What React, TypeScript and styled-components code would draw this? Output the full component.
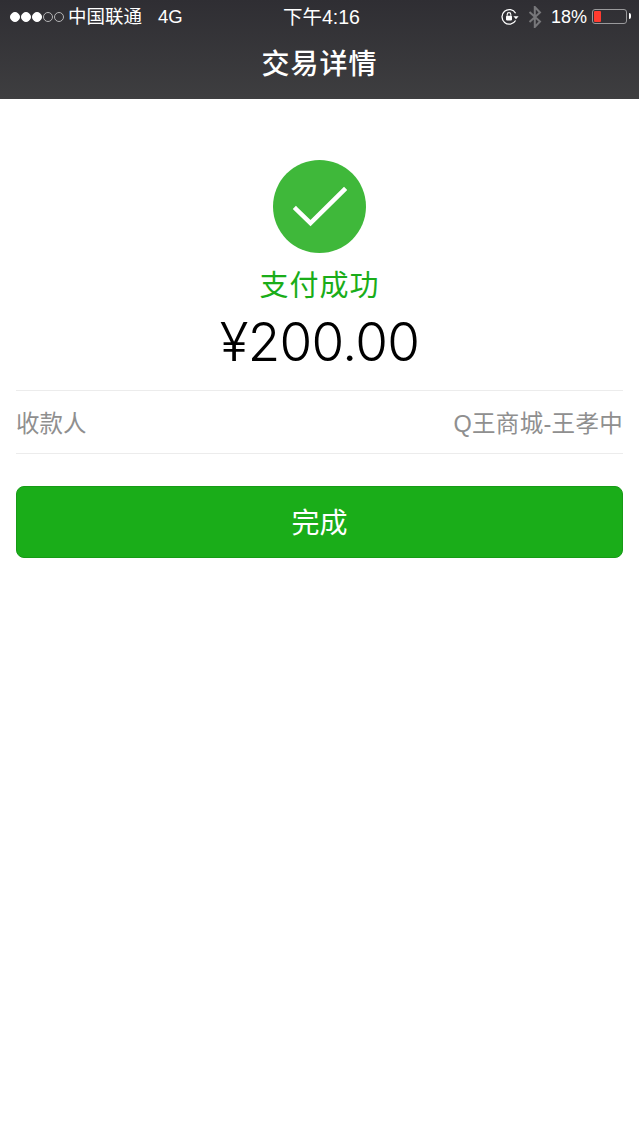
import styled, { createGlobalStyle } from "styled-components";

const GlobalStyle = createGlobalStyle`
    html, body {
        margin: 0;
        padding: 0;
        background: #ffffff;
    }
    body {
        font-family: "Liberation Sans", "Noto Sans CJK SC", sans-serif;
    }
`
const Page = styled.div`
    width: 639px;
    height: 1136px;
    display: flex;
    flex-direction: column;
    background: #ffffff;
    overflow: hidden;
`
const Header = styled.header`
    height: 99px;
    display: flex;
    flex-direction: column;
    background: linear-gradient(#2f2e33, #3e3e40);
    color: #ffffff;
`
const StatusBar = styled.div`
    height: 33px;
    display: grid;
    grid-template-columns: 1fr auto 1fr;
    align-items: center;
    padding: 0 12px 0 10px;
    line-height: 20px;
`
const StatusLeft = styled.div`
    display: flex;
    align-items: center;
    font-size: 18.5px;
`
const StatusRight = styled.div`
    display: flex;
    align-items: center;
    justify-content: flex-end;
`
const Signal = styled.div`
    display: flex;
    gap: 1px;
    margin-right: 4px;
`
const Dot = styled.span<{ $on: boolean }>`
    width: 10px;
    height: 10px;
    box-sizing: border-box;
    border-radius: 50%;
    background: ${(p) => (p.$on ? "#ffffff" : "transparent")};
    border: 1px solid ${(p) => (p.$on ? "#ffffff" : "#b5b5b7")};
`
const Carrier = styled.span`
    margin-right: 16px;
`
const Clock = styled.span`
    margin-left: 6px;
    font-size: 19.5px;
`
const Percent = styled.span`
    margin: 0 5px 0 9px;
    font-size: 18px;
`
const Battery = styled.div`
    width: 35px;
    height: 15px;
    box-sizing: border-box;
    border: 1px solid #9a9a9c;
    border-radius: 3px;
    padding: 1px;
    position: relative;
    &::after {
        content: "";
        position: absolute;
        right: -5px;
        top: 3px;
        width: 2px;
        height: 6px;
        background: #ffffff;
        border-radius: 0 2px 2px 0;
    }
`
const BatteryLevel = styled.div`
    width: 7px;
    height: 100%;
    background: #ff3b30;
    border-radius: 1px;
`
const BluetoothIcon = styled.svg`
    margin-left: 8px;
`
const Title = styled.h1`
    margin: 0;
    padding-top: 13px;
    font-size: 28px;
    line-height: 38px;
    font-weight: 500;
    letter-spacing: 1px;
    text-align: center;
`
const Main = styled.main`
    display: flex;
    flex-direction: column;
    padding: 0 16px;
`
const Result = styled.section`
    display: flex;
    flex-direction: column;
    align-items: center;
    padding-top: 61px;
`
const SuccessIcon = styled.div`
    width: 93px;
    height: 93px;
    border-radius: 50%;
    background: #3fb83a;
    display: flex;
    align-items: center;
    justify-content: center;
`
const ResultText = styled.div`
    margin-top: 14px;
    font-size: 29px;
    line-height: 38px;
    letter-spacing: 1px;
    color: #1aad19;
`
const Amount = styled.div`
    margin-top: 1px;
    font-family: Inter, "Liberation Sans", sans-serif;
    font-size: 53px;
    line-height: 72px;
    font-weight: 300;
    letter-spacing: -0.7px;
    color: #000000;
`
const DetailRow = styled.div`
    margin-top: 12px;
    height: 64px;
    box-sizing: border-box;
    padding-top: 4px;
    display: flex;
    align-items: center;
    justify-content: space-between;
    border-top: 1px solid #ececec;
    border-bottom: 1px solid #ececec;
    font-size: 23.5px;
    line-height: 30px;
    color: #8f8f8f;
`
const Payee = styled.span`
    letter-spacing: 0.3px;
`
const DoneButton = styled.button`
    margin-top: 32px;
    height: 72px;
    padding: 4px 0 0;
    border: 1px solid #179b16;
    border-radius: 8px;
    background: #1aad19;
    color: #ffffff;
    font-family: inherit;
    font-size: 28px;
    line-height: 36px;
`

export default function App() {
    return (
        <Page>
            <GlobalStyle />
            <Header>
                <StatusBar>
                    <StatusLeft>
                        <Signal>
                            {[true, true, true, false, false].map((on, i) => (
                                <Dot key={i} $on={on} />
                            ))}
                        </Signal>
                        <Carrier>中国联通</Carrier>
                        <span>4G</span>
                    </StatusLeft>
                    <Clock>下午4:16</Clock>
                    <StatusRight>
                        <svg width="20" height="18" viewBox="0 0 20 18" fill="none">
                            <path d="M15.6 5.2A7.3 7.3 0 1 0 15.6 12.5" stroke="#fff" strokeWidth="1.3" />
                            <path d="M13.4 8.2h5.2l-2.6 3.1z" fill="#fff" />
                            <rect x="6" y="7.8" width="6" height="4.6" rx="0.8" fill="#fff" />
                            <path d="M7.2 7.8V6.4a1.8 1.8 0 0 1 3.6 0v1.4" stroke="#fff" strokeWidth="1.1" />
                        </svg>
                        <BluetoothIcon width="14" height="22" viewBox="0 0 14 22" fill="none">
                            <path d="M1.5 6l10.5 9.5L6.8 21V1l5.2 5.5L1.5 16" stroke="#77777a" strokeWidth="2" />
                        </BluetoothIcon>
                        <Percent>18%</Percent>
                        <Battery>
                            <BatteryLevel />
                        </Battery>
                    </StatusRight>
                </StatusBar>
                <Title>交易详情</Title>
            </Header>
            <Main>
                <Result>
                    <SuccessIcon>
                        <svg width="54" height="42" viewBox="0 0 54 42" fill="none">
                            <path d="M3 23L17.5 37 51 4" stroke="#ffffff" strokeWidth="4.5" strokeLinecap="square" />
                        </svg>
                    </SuccessIcon>
                    <ResultText>支付成功</ResultText>
                    <Amount>¥200.00</Amount>
                </Result>
                <DetailRow>
                    <span>收款人</span>
                    <Payee>Q王商城-王孝中</Payee>
                </DetailRow>
                <DoneButton>完成</DoneButton>
            </Main>
        </Page>
    );
}
